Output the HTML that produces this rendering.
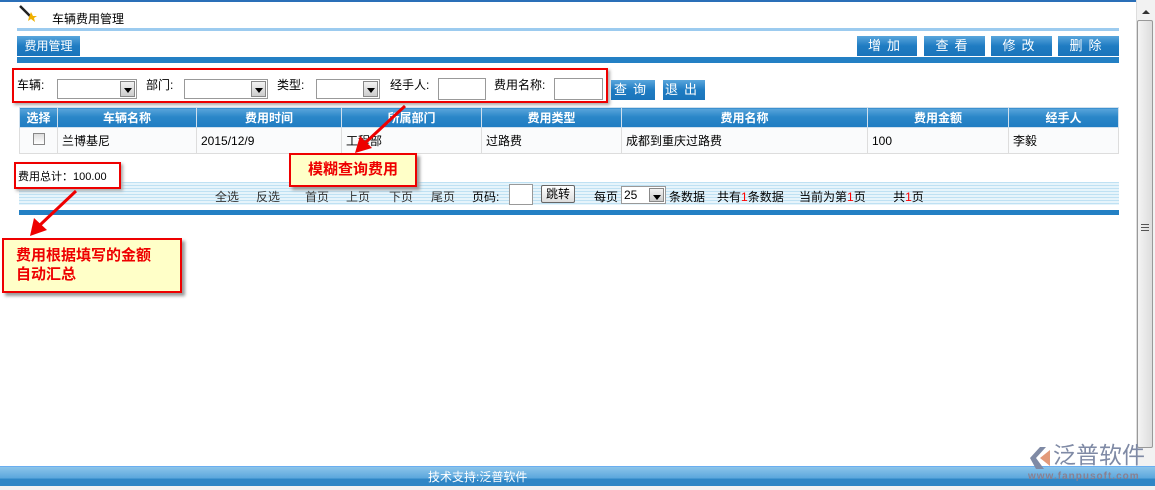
<!DOCTYPE html>
<html><head><meta charset="utf-8">
<style>
*{margin:0;padding:0;box-sizing:border-box}
body{width:1155px;height:490px;position:relative;overflow:hidden;background:#fff;font-family:"Liberation Sans","WenQuanYi Zen Hei","Noto Sans CJK SC",sans-serif;font-size:12px;color:#000}
.a{position:absolute;white-space:nowrap}
.btn{position:absolute;height:20px;background:linear-gradient(#5aa6dc,#1f7cc2 50%,#1a74bb);color:#fff;text-align:center;line-height:20px;font-size:13px;letter-spacing:6px}
.sel{position:absolute;height:20px;border:1px solid #999;background:#fff}
.sel i{position:absolute;right:1px;top:1px;width:15px;height:16px;background:linear-gradient(#f2f2f2,#ccc);border:1px solid #888}
.sel i:after{content:"";position:absolute;left:3px;top:6px;border:4px solid transparent;border-top:5px solid #000}
.inp{position:absolute;height:22px;border:1px solid #999;background:#fff}
.lbl{position:absolute;font-size:12px}
table{position:absolute;left:19px;top:107px;width:1100px;border-collapse:collapse}
th{height:20px;background:linear-gradient(#5aa6dc,#2a86c8 45%,#1f7cc2);color:#fff;font-weight:bold;font-size:12px;border:1px solid #cfe0ee}
td{height:26px;border:1px solid #ddd;background:#fafbfc;padding-left:4px;font-size:12px}
.call{position:absolute;background:#ffffc8;border:2px solid #e00;box-shadow:3px 3px 3px #999;color:#e00;font-weight:bold;font-size:15px}
.pg{position:absolute;top:188px;font-size:12px;color:#333;white-space:nowrap}
</style></head><body>
<div class="a" style="left:0;top:0;width:1136px;height:2px;background:#2a6fb8"></div>
<svg class="a" style="left:18px;top:4px" width="20" height="18"><line x1="2" y1="2" x2="12" y2="12" stroke="#222" stroke-width="2.5"/><polygon points="13,8 15,12 19,12 16,14 17,18 13,15 10,17 11,13" fill="#f0b000"/></svg>
<div class="a" style="left:52px;top:10px;font-size:12px">车辆费用管理</div>
<div class="a" style="left:17px;top:28px;width:1102px;height:3px;background:#9ccbef"></div>
<div class="btn" style="left:17px;top:36px;width:63px;letter-spacing:0;font-size:12px">费用管理</div>
<div class="btn" style="left:857px;top:36px;width:60px">增加</div>
<div class="btn" style="left:924px;top:36px;width:61px">查看</div>
<div class="btn" style="left:991px;top:36px;width:61px">修改</div>
<div class="btn" style="left:1058px;top:36px;width:61px">删除</div>
<div class="a" style="left:17px;top:57px;width:1102px;height:6px;background:#2380c4"></div>

<div class="a" style="left:12px;top:68px;width:596px;height:35px;border:2px solid #e00;box-shadow:2px 2px 3px #aaa"></div>
<div class="lbl" style="left:17px;top:76px">车辆:</div>
<div class="sel" style="left:57px;top:79px;width:80px"><i></i></div>
<div class="lbl" style="left:146px;top:76px">部门:</div>
<div class="sel" style="left:184px;top:79px;width:84px"><i></i></div>
<div class="lbl" style="left:277px;top:76px">类型:</div>
<div class="sel" style="left:316px;top:79px;width:64px"><i></i></div>
<div class="lbl" style="left:390px;top:76px">经手人:</div>
<div class="inp" style="left:438px;top:78px;width:48px"></div>
<div class="lbl" style="left:494px;top:76px">费用名称:</div>
<div class="inp" style="left:554px;top:78px;width:49px"></div>
<div class="btn" style="left:611px;top:80px;width:44px">查询</div>
<div class="btn" style="left:663px;top:80px;width:42px">退出</div>

<table>
<tr><th style="width:38px">选择</th><th style="width:139px">车辆名称</th><th style="width:145px">费用时间</th><th style="width:140px">所属部门</th><th style="width:140px">费用类型</th><th style="width:246px">费用名称</th><th style="width:141px">费用金额</th><th>经手人</th></tr>
<tr><td style="padding:0;text-align:center"><span style="display:inline-block;width:12px;height:12px;border:1px solid #888;background:linear-gradient(#ddd,#fff)"></span></td><td>兰博基尼</td><td>2015/12/9</td><td>工程部</td><td>过路费</td><td>成都到重庆过路费</td><td>100</td><td>李毅</td></tr>
</table>

<div class="a" style="left:19px;top:182px;width:1100px;height:23px;background:repeating-linear-gradient(#bfe1f3 0 1px,#e6f4fb 1px 3px)"></div>
<div class="a" style="left:14px;top:162px;width:107px;height:27px;border:2px solid #e00;box-shadow:2px 2px 3px #aaa;background:#fff"></div>
<div class="a" style="left:18px;top:168px;font-size:11px">费用总计：100.00</div>
<div class="pg" style="left:215px">全选</div>
<div class="pg" style="left:256px">反选</div>
<div class="pg" style="left:305px">首页</div>
<div class="pg" style="left:346px">上页</div>
<div class="pg" style="left:389px">下页</div>
<div class="pg" style="left:431px">尾页</div>
<div class="pg" style="left:472px;color:#000">页码:</div>
<div class="inp" style="left:509px;top:184px;width:24px;height:21px"></div>
<div class="a" style="left:541px;top:185px;width:34px;height:18px;border:1px solid #666;border-radius:2px;background:linear-gradient(#fff,#ddd);font-size:12px;text-align:center;line-height:16px">跳转</div>
<div class="pg" style="left:594px;color:#000">每页</div>
<div class="sel" style="left:621px;top:186px;width:45px;height:18px;font-size:12px;padding-left:2px;line-height:16px">25<i style="height:14px"></i></div>
<div class="pg" style="left:669px;color:#000">条数据　共有<span style="color:red">1</span>条数据　 当前为第<span style="color:red">1</span>页 　　共<span style="color:red">1</span>页</div>
<div class="a" style="left:19px;top:210px;width:1100px;height:5px;background:#2380c4"></div>

<div class="call" style="left:289px;top:153px;width:128px;height:34px;line-height:30px;text-align:center">模糊查询费用</div>
<div class="call" style="left:2px;top:238px;width:180px;height:55px;padding:6px 0 0 12px;line-height:19px">费用根据填写的金额<br>自动汇总</div>
<svg class="a" style="left:0;top:0" width="450" height="250">
<line x1="405" y1="106" x2="365" y2="143" stroke="#e00" stroke-width="3"/><polygon points="355,153 360,136 372,148" fill="#e00"/>
<line x1="76" y1="191" x2="40" y2="225" stroke="#e00" stroke-width="3"/><polygon points="30,236 34,218 47,230" fill="#e00"/>
</svg>

<div class="a" style="left:1136px;top:0;width:19px;height:490px;background:#f2f2f2;border-left:1px solid #ddd"></div>
<div class="a" style="left:1142px;top:6px;border:4px solid transparent;border-bottom:4px solid #333"></div>
<div class="a" style="left:1137px;top:20px;width:16px;height:428px;border:1px solid #999;border-radius:2px;background:linear-gradient(90deg,#f4f4f4,#ddd)"></div>
<div class="a" style="left:1141px;top:224px;width:8px;height:7px;border-top:1px solid #555;border-bottom:1px solid #555"><div style="margin-top:2px;height:1px;background:#555"></div></div>

<div class="a" style="left:0;top:466px;width:1155px;height:20px;border-top:1px solid #6aaef0;background:linear-gradient(#8cc4ea,#5aa6dc 60%,#2f86c6 62%,#2f86c6)"></div>
<div class="a" style="left:428px;top:468px;color:#fff;font-size:12px">技术支持:泛普软件</div>
<div class="a" style="left:0;top:486px;width:1155px;height:4px;background:#f2f2f2"></div>
<svg class="a" style="left:1026px;top:444px" width="28" height="28"><path d="M4 14 L14 3 L20 3 L10 14 L18 25 L10 25 Z" fill="#7f8aa5"/><path d="M14 14 L24 6 L24 22 Z" fill="#e39a7a"/></svg>
<div class="a" style="left:1053px;top:441px;font-size:23px;line-height:28px;color:#7f8aa5">泛普软件</div>
<div class="a" style="left:1028px;top:471px;font-size:10px;color:#8a8090;font-weight:bold;letter-spacing:1px">www.fanpusoft.com</div>
</body></html>
